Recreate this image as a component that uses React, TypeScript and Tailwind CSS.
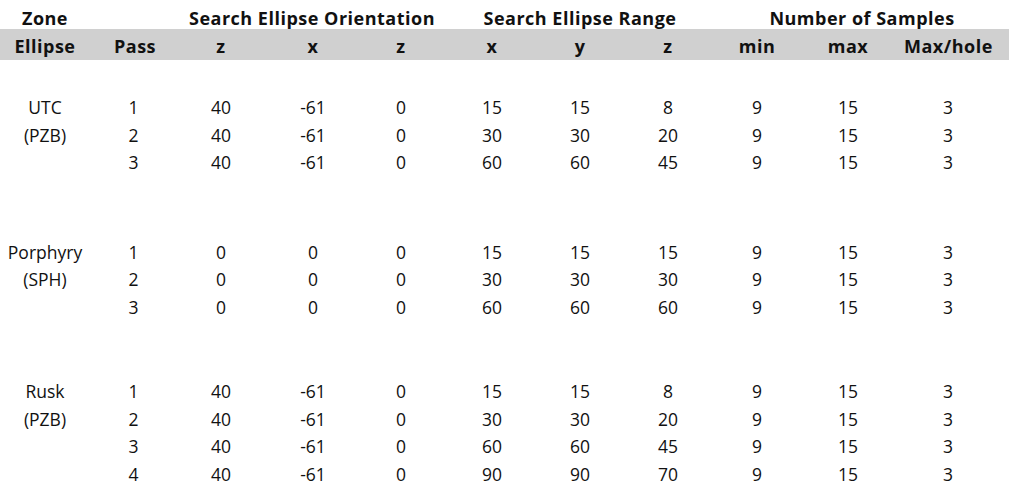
import React from 'react';

type Row = { pass: number; vals: number[] };
type Zone = { name: string; code: string; rows: Row[]; gapClass: string };

// column widths are picked so the centred text lands on the same x as the sheet
const cols = 'grid grid-cols-[90px_90px_82px_102px_74px_108px_68px_108px_70px_112px_88px]';

const zones: Zone[] = [
  {
    name: 'UTC',
    code: '(PZB)',
    gapClass: 'h-[34px]',
    rows: [
      { pass: 1, vals: [40, -61, 0, 15, 15, 8, 9, 15, 3] },
      { pass: 2, vals: [40, -61, 0, 30, 30, 20, 9, 15, 3] },
      { pass: 3, vals: [40, -61, 0, 60, 60, 45, 9, 15, 3] },
    ],
  },
  {
    name: 'Porphyry',
    code: '(SPH)',
    gapClass: 'h-[62px]',
    rows: [
      { pass: 1, vals: [0, 0, 0, 15, 15, 15, 9, 15, 3] },
      { pass: 2, vals: [0, 0, 0, 30, 30, 30, 9, 15, 3] },
      { pass: 3, vals: [0, 0, 0, 60, 60, 60, 9, 15, 3] },
    ],
  },
  {
    name: 'Rusk',
    code: '(PZB)',
    gapClass: 'h-[57px]',
    rows: [
      { pass: 1, vals: [40, -61, 0, 15, 15, 8, 9, 15, 3] },
      { pass: 2, vals: [40, -61, 0, 30, 30, 20, 9, 15, 3] },
      { pass: 3, vals: [40, -61, 0, 60, 60, 45, 9, 15, 3] },
      { pass: 4, vals: [40, -61, 0, 90, 90, 70, 9, 15, 3] },
    ],
  },
];

const subHeads = ['Ellipse', 'Pass', 'z', 'x', 'z', 'x', 'y', 'z', 'min', 'max', 'Max/hole'];

function ZoneBlock({ zone }: { zone: Zone }) {
  return (
    <>
      <div className={zone.gapClass} />
      {zone.rows.map((row, i) => (
        <div key={row.pass} className={`${cols} h-[27.5px] items-center text-center`}>
          <div>{i === 0 ? zone.name : i === 1 ? zone.code : ''}</div>
          <div className="pr-[3px]">{row.pass}</div>
          {row.vals.map((v, j) => (
            <div key={j}>{v}</div>
          ))}
        </div>
      ))}
    </>
  );
}

export default function App() {
  return (
    <div className="w-[1009px] h-[496px] overflow-hidden bg-white text-[#111] text-[17.5px] leading-none font-['Open_Sans',sans-serif]">
      {/* group headers */}
      <div className={`${cols} h-[29px] items-center text-center font-bold text-[18px] tracking-[0.5px]`}>
        <div className="pt-[6px]">Zone</div>
        <div />
        <div className="col-span-3 pt-[6px] pl-[6px]">Search Ellipse Orientation</div>
        <div className="col-span-3 pt-[6px]">Search Ellipse Range</div>
        <div className="col-span-3 pt-[6px] pl-[10px]">Number of Samples</div>
      </div>

      {/* sub headers on the grey band */}
      <div className={`${cols} h-[31px] items-center text-center font-bold text-[18px] tracking-[0.5px] bg-[#d0d0d0]`}>
        {subHeads.map((h, i) => (
          <div key={i} className="pt-[2px]">{h}</div>
        ))}
      </div>

      {zones.map((z) => (
        <ZoneBlock key={z.name} zone={z} />
      ))}
    </div>
  );
}
